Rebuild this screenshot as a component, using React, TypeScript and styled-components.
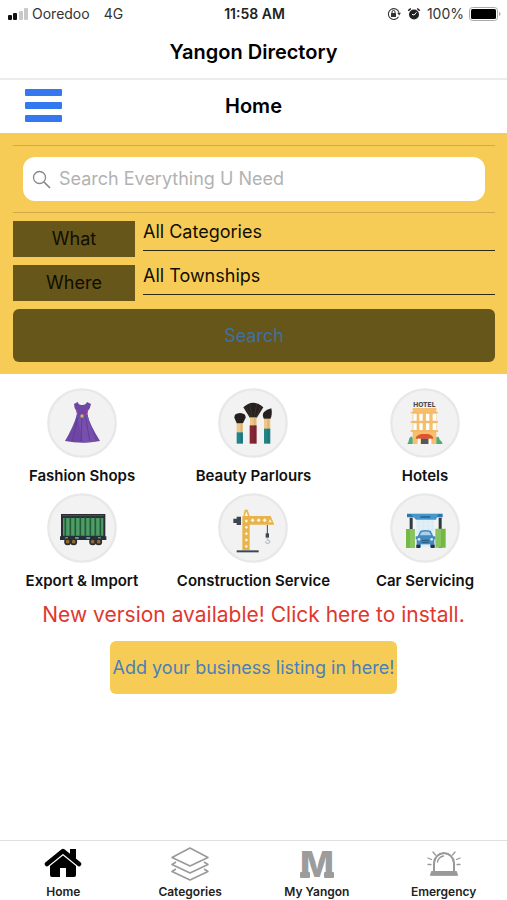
import React from "react";
import styled, { createGlobalStyle } from "styled-components";

const yellow = "#f6cc57";
const olive = "#665619";

const GlobalStyle = createGlobalStyle`
  *, *::before, *::after { box-sizing: border-box; }
  body { margin: 0; background: #fff; }
  button, input, select { font: inherit; margin: 0; }
`;

const Page = styled.div`
  display: flex;
  flex-direction: column;
  min-height: 100vh;
  font-family: Inter, "Liberation Sans", sans-serif;
  color: #000;
  background: #fff;
`;

const StatusBar = styled.div`
  display: grid;
  grid-template-columns: 1fr auto 1fr;
  align-items: center;
  height: 28px;
  padding: 0 6px 0 8px;
  font-size: 14px;
  line-height: 20px;
  color: #333;
`;

const StatusGroup = styled.div<{ $end?: boolean }>`
  display: flex;
  align-items: center;
  justify-content: ${(p) => (p.$end ? "flex-end" : "flex-start")};
  gap: ${(p) => (p.$end ? "4px" : "4px")};
`;

const Network = styled.span`
  margin-left: 10px;
`;

const Clock = styled.time`
  font-weight: 600;
  color: #222;
`;

const TitleBar = styled.header`
  display: flex;
  align-items: center;
  justify-content: center;
  height: 52px;
  padding-bottom: 2px;
  border-bottom: 2px solid #ececec;
`;

const Title = styled.h1`
  margin: 0;
  font-size: 20px;
  line-height: 24px;
  font-weight: 600;
`;

const NavBar = styled.div`
  display: grid;
  grid-template-columns: 1fr auto 1fr;
  align-items: center;
  height: 53px;
  padding: 0 24px 2px;
`;

const NavTitle = styled.h2`
  margin: 0;
  font-size: 20px;
  line-height: 24px;
  font-weight: 600;
`;

const MenuButton = styled.button`
  justify-self: start;
  display: flex;
  flex-direction: column;
  gap: 6px;
  padding: 0 1px;
  border: 0;
  background: none;
`;

const MenuLine = styled.span`
  width: 37px;
  height: 7px;
  border-radius: 1px;
  background: #3478f0;
`;

const SearchPanel = styled.form`
  display: flex;
  flex-direction: column;
  gap: 8px;
  padding: 12px 12px 12px 13px;
  background: ${yellow};
`;

const SearchBand = styled.div`
  padding: 11px 10px;
  border: solid #cfa94c;
  border-width: 1px 0;
`;

const SearchBox = styled.label`
  display: flex;
  align-items: center;
  gap: 8px;
  height: 44px;
  padding: 0 9px;
  border-radius: 12px;
  background: #fff;
`;

const SearchInput = styled.input`
  flex: 1;
  min-width: 0;
  padding: 0;
  border: 0;
  outline: 0;
  background: none;
  font-size: 18px;
  line-height: 24px;
  color: #222;
  &::placeholder { color: #b2b2b2; opacity: 1; }
`;

const FilterRow = styled.div`
  display: grid;
  grid-template-columns: 122px 1fr;
  column-gap: 8px;
  align-items: start;
`;

const FilterLabel = styled.label`
  height: 36px;
  font-size: 18px;
  line-height: 36px;
  text-align: center;
  color: #100d02;
  background: ${olive};
`;

const FilterSelect = styled.select`
  appearance: none;
  width: 100%;
  height: 30px;
  padding: 0 0 8px;
  border: 0;
  border-bottom: 1px solid #30280f;
  border-radius: 0;
  background: none;
  font-size: 18px;
  line-height: 22px;
  color: #100d04;
`;

const SearchButton = styled.button`
  height: 53px;
  border: 0;
  border-radius: 6px;
  background: ${olive};
  font-size: 18px;
  color: #3c70a8;
`;

const Shortcuts = styled.nav`
  display: grid;
  grid-template-columns: 11fr 12fr 11fr;
  row-gap: 7px;
  padding-top: 14px;
`;

const Shortcut = styled.a`
  display: flex;
  flex-direction: column;
  align-items: center;
  gap: 8px;
  font-size: 15px;
  line-height: 20px;
  font-weight: 600;
  color: #111;
  text-decoration: none;
  white-space: nowrap;
`;

const Promo = styled.div`
  display: flex;
  flex-direction: column;
  align-items: center;
  gap: 12px;
  padding-top: 10px;
`;

const UpdateLink = styled.a`
  font-size: 21px;
  line-height: 28px;
  color: #e0382e;
  text-decoration: none;
  white-space: nowrap;
`;

const ListingButton = styled.button`
  height: 53px;
  padding: 0 3px;
  border: 0;
  border-radius: 6px;
  background: ${yellow};
  font-size: 18px;
  color: #4a80b8;
  white-space: nowrap;
`;

const TabBar = styled.nav`
  display: grid;
  grid-template-columns: repeat(4, 1fr);
  height: 60px;
  margin-top: auto;
  padding-top: 6px;
  border-top: 1px solid #e0e0e0;
`;

const Tab = styled.a`
  display: flex;
  flex-direction: column;
  align-items: center;
  gap: 3px;
  font-size: 12px;
  line-height: 16px;
  font-weight: 600;
  color: #222;
  text-decoration: none;
`;

const Signal = () => (
  <svg width="20" height="14" viewBox="0 0 20 14" aria-hidden="true">
    <rect x="0" y="8" width="4" height="5" rx="1" fill="#111" />
    <rect x="5" y="6" width="4" height="7" rx="1" fill="#111" />
    <rect x="11" y="4" width="4" height="9" rx="1" fill="#c8c8c8" />
    <rect x="16" y="1" width="4" height="12" rx="1" fill="#c8c8c8" />
  </svg>
);

const RotationLock = () => (
  <svg width="14" height="14" viewBox="0 0 14 14" fill="none" stroke="#333" aria-hidden="true">
    <path d="M11.5 9.7A5.4 5.4 0 1 1 12 5.6" strokeWidth="1.1" />
    <path d="M10.2 5.8h3.7L12.2 8.5z" fill="#333" stroke="none" />
    <rect x="4" y="6" width="5" height="4" rx=".5" fill="#333" stroke="none" />
    <path d="M5 6.3V5a1.5 1.5 0 0 1 3 0v1.3" strokeWidth="1" />
  </svg>
);

const Alarm = () => (
  <svg width="18" height="14" viewBox="-2 0 18 14" aria-hidden="true">
    <circle cx="7" cy="7.500" r="5" fill="#222" />
    <path d="M1.500 4A3 3 0 0 1 4 1.700M12.500 4A3 3 0 0 0 10 1.700" fill="none" stroke="#222" strokeWidth="1.500" />
    <path d="M9.500 5.300L7.200 8 5 7.400" fill="none" stroke="#fff" strokeWidth="1" />
  </svg>
);

const Battery = () => (
  <svg width="33" height="16" viewBox="0 0 33 16" aria-hidden="true">
    <rect x="1.5" y="1.5" width="28" height="13" rx="3" fill="#fff" stroke="#aaa" />
    <rect x="3" y="3" width="25" height="10" rx="1.5" fill="#000" />
    <path d="M31 6c2 .5 2 3.500 0 4z" fill="#aaa" />
  </svg>
);

const Magnifier = () => (
  <svg width="19" height="19" viewBox="0 0 19 19" fill="none" stroke="#888" aria-hidden="true">
    <circle cx="7.500" cy="7.500" r="6" strokeWidth="1.300" />
    <path d="M12 12l6 6" strokeWidth="1.700" />
  </svg>
);

type DiscProps = { left: number; children: React.ReactNode };

const Disc = ({ left, children }: DiscProps) => (
  <svg width="70" height="70" viewBox={`${left} 24 210 210`} aria-hidden="true">
    <circle cx={left + 105} cy="129" r="101" fill="#f2f2f2" stroke="#e8e8e8" strokeWidth="7" />
    {children}
  </svg>
);

const Dress = () => (
  <Disc left={21}>
    <path d="M102 72l11-6q3 10 13 9 11 1 15-9l12 6q-2 13-9 21l-2 10q7 31 38 80-53 10-105 0 25-41 36-80l-2-10q-7-9-7-21z" fill="#6e46a4" />
    <path d="M110 103q16 3 32 0 7 31 25 81-18 4-38 3z" fill="#7750ae" />
    <path d="M114 112l-17 70M126 113l-3 71M137 112l12 70" stroke="#643c97" strokeWidth="3" fill="none" />
    <path d="M110 88l3 17M142 88l-2 17" stroke="#c23b9b" strokeWidth="3" />
    <path d="M110 104q16 4 32 0v6q-16 4-32 0z" fill="#4f5aa8" />
    <circle cx="126" cy="108" r="5" fill="#e8ae48" />
  </Disc>
);

const Brushes = () => (
  <Disc left={26}>
    <path d="M83 131L75 113q-1-13 17-14 18 1 17 14l-9 18z" fill="#26201f" />
    <path d="M82 130h19v28H82z" fill="#eec686" />
    <path d="M82 157h19v34H82z" fill="#22838a" />
    <path d="M122 114L102 82q28-28 60 0l-20 32z" fill="#26201f" />
    <path d="M110 81l16 32M121 73l8 40M142 72l-7 41M154 80l-14 33" stroke="#514532" strokeWidth="1.500" />
    <path d="M122 112h20v25h-20z" fill="#eec686" />
    <path d="M121 136h21v55h-21z" fill="#852633" />
    <path d="M164 117q-7-12 0-21 8-7 22-11 4 18-3 32z" fill="#26201f" />
    <path d="M164 116h19v31h-19z" fill="#eec686" />
    <path d="M164 146h19v45h-19z" fill="#22838a" />
    <path d="M96 132v59M136 114v77M177 118v73" stroke="#00000018" strokeWidth="5" />
  </Disc>
);

const Hotel = () => (
  <Disc left={29}>
    <text x="132" y="82" textAnchor="middle" fontFamily="Inter, sans-serif" fontSize="20" fontWeight="800" fill="#4a4f58">HOTEL</text>
    <path d="M97 84h71v108H97z" fill="#f6bf6d" />
    <path d="M91 96h82v4H91zM91 124h82v5H91zM91 151h82v5H91z" fill="#f3b868" />
    <path d="M99 101h10v21H99zM117 101h10v21h-10zM137 101h10v21h-10zM157 101h10v21h-10zM99 130h10v20H99zM117 130h10v20h-10zM137 130h10v20h-10zM157 130h10v20h-10z" fill="#fff" />
    <path d="M106 176q1-11 17-14h20q15 3 16 14z" fill="#e05332" />
    <path d="M112 176h8v16h-8zM145 176h8v16h-8z" fill="#fff" />
    <path d="M122 176h22v16h-22z" fill="#505862" />
    <path d="M81 192q4-5 6-17 7-11 10-1v18zM168 192v-20q8-5 10 7 7 4 9 13z" fill="#50ab73" />
  </Disc>
);

const Wagon = () => (
  <Disc left={21}>
    <path d="M63 87h133v74H63z" fill="#292c30" />
    <path d="M69 99h121v53H69z" fill="#4d9d65" />
    <path d="M76 97v56M91 97v56M106 97v56M121 97v56M136 97v56M151 97v56M166 97v56M181 97v56" stroke="#245a3c" strokeWidth="5" />
    <path d="M67 92h125" stroke="#37634e" strokeWidth="3" />
    <path d="M60 154h139v11H60z" fill="#273039" />
    <path d="M76 159h8M105 159h11M139 159h11M174 159h8" stroke="#7db3bd" strokeWidth="4" />
    <g fill="#936a2d" stroke="#292c30" strokeWidth="5">
      <circle cx="83" cy="170" r="8" /><circle cx="101" cy="170" r="8" />
      <circle cx="158" cy="170" r="8" /><circle cx="176" cy="170" r="8" />
    </g>
  </Disc>
);

const Crane = () => (
  <Disc left={26}>
    <path d="M72 101h10v-6h13v25H82v-6H72z" fill="#3b4650" />
    <path d="M102 94l4-20h9l6 20v101H99V94z" fill="#e9b34c" />
    <path d="M119 93h65l11 26h-76z" fill="#e9b34c" />
    <path d="M106 93l5-14 5 14zM106 108l5-5 5 5-5 5zM106 127l5-5 5 5-5 5zM106 146l5-5 5 5-5 5zM106 165l5-5 5 5-5 5zM106 184l5-5 5 5-5 5zM124 106l6-6 6 6-6 6zM142 106l6-6 6 6-6 6zM160 106l6-6 6 6-6 6zM178 112l4-10 5 10z" fill="#fff4db" />
    <path d="M82 199h66" stroke="#3b4650" strokeWidth="6" />
    <path d="M174 120v30" stroke="#3b4650" strokeWidth="3" />
    <path d="M169 145h10v13h-10z" fill="#3b4650" />
    <path d="M174 158v7q8 1 7 7-7 8-13-2" fill="none" stroke="#c0c2c4" strokeWidth="4" />
  </Disc>
);

const CarLift = () => (
  <Disc left={29}>
    <path d="M107 105h55v44h-55z" fill="#e0eff5" />
    <path d="M116 108v34M130 108v34M144 108v34M156 108v34" stroke="#d2e7ef" strokeWidth="3" strokeDasharray="6 5" />
    <path d="M88 98h9v91h-9zM175 98h9v91h-9z" fill="#303a41" />
    <path d="M77 132h12v57H77zM183 131h13v57h-13z" fill="#74b943" />
    <path d="M89 132h15v57H89zM165 131h18v57h-18z" fill="#8ac461" />
    <path d="M80 86h107v11H80z" fill="#2879b3" />
    <path d="M91 87h83l-7 17h-60z" fill="#4598ce" />
    <path d="M120 96h30" stroke="#245b7c" strokeWidth="4" />
    <path d="M106 154h6l8-17q15-4 31 0l8 17h6v9h-3v23h-53v-23h-3z" fill="#438ac0" />
    <path d="M118 151l6-10q12-3 23 0l6 10z" fill="#a7d2e9" />
    <circle cx="116" cy="163" r="4" fill="#d8edf5" /><circle cx="154" cy="163" r="4" fill="#d8edf5" />
    <path d="M124 166h22M124 172h22" stroke="#245b7c" strokeWidth="3" />
    <path d="M121 178h29v8h-29z" fill="#e6eef2" />
    <path d="M108 179h12v10h-12zM151 179h12v10h-12z" fill="#26333b" />
  </Disc>
);

const HomeIcon = () => (
  <svg width="38" height="34" viewBox="0 0 38 34" aria-hidden="true">
    <path d="M3 17L19 4l16 13" fill="none" stroke="#000" strokeWidth="4.500" strokeLinecap="round" strokeLinejoin="round" />
    <path d="M26 2h6v12l-6-5z" />
    <path d="M6 19L19 8.500 32 19v9q0 2-2 2h-8v-9h-6v9H8q-2 0-2-2z" />
  </svg>
);

const LayersIcon = () => (
  <svg width="38" height="34" viewBox="0 0 38 34" fill="none" stroke="#999" strokeWidth="1.500" strokeLinejoin="round" aria-hidden="true">
    <path d="M19 1l18 9.500L19 19 1 10.500zM5 15l-4 2.500L19 26l18-8.500-4-2.500M5 22l-4 2.500L19 33l18-8.500-4-2.500" />
  </svg>
);

const MonogramIcon = () => (
  <svg width="38" height="34" viewBox="0 0 38 34" fill="#9c9c9c" aria-hidden="true">
    <text x="19" y="30" textAnchor="middle" fontFamily="Inter, sans-serif" fontWeight="800" fontSize="36">M</text>
    <rect x="2" y="25" width="10" height="6" rx="1" />
    <rect x="26" y="25" width="10" height="6" rx="1" />
  </svg>
);

const SirenIcon = () => (
  <svg width="38" height="34" viewBox="0 0 38 34" fill="none" stroke="#999" strokeLinecap="round" aria-hidden="true">
    <path d="M9 24V16q1-9 10-10 9 1 10 10v8" strokeWidth="2" />
    <path d="M12.500 15q1-5 6-6" strokeWidth="1.300" />
    <path d="M5.500 28l1-3.500h25l1 3.500z" fill="#999" strokeWidth="1" />
    <path d="M8 5l2.500 3M30 5l-2.500 3M3 11l3.500 1.500M35 11l-3.500 1.500M3 17.500h3M35 17.500h-3" strokeWidth="1.300" />
  </svg>
);

const shortcuts = [
  { name: "Fashion Shops", Icon: Dress },
  { name: "Beauty Parlours", Icon: Brushes },
  { name: "Hotels", Icon: Hotel },
  { name: "Export & Import", Icon: Wagon },
  { name: "Construction Service", Icon: Crane },
  { name: "Car Servicing", Icon: CarLift },
];

const tabs = [
  { name: "Home", Icon: HomeIcon },
  { name: "Categories", Icon: LayersIcon },
  { name: "My Yangon", Icon: MonogramIcon },
  { name: "Emergency", Icon: SirenIcon },
];

export default function App() {
  return (
    <Page>
      <GlobalStyle />
      <StatusBar>
        <StatusGroup>
          <Signal />
          <span>Ooredoo</span>
          <Network>4G</Network>
        </StatusGroup>
        <Clock>11:58 AM</Clock>
        <StatusGroup $end>
          <RotationLock />
          <Alarm />
          <span>100%</span>
          <Battery />
        </StatusGroup>
      </StatusBar>
      <TitleBar>
        <Title>Yangon Directory</Title>
      </TitleBar>
      <NavBar>
        <MenuButton type="button" aria-label="Menu">
          <MenuLine />
          <MenuLine />
          <MenuLine />
        </MenuButton>
        <NavTitle>Home</NavTitle>
      </NavBar>
      <SearchPanel onSubmit={(e) => e.preventDefault()}>
        <SearchBand>
          <SearchBox>
            <Magnifier />
            <SearchInput type="text" aria-label="Search" placeholder="Search Everything U Need" />
          </SearchBox>
        </SearchBand>
        <FilterRow>
          <FilterLabel htmlFor="what">What</FilterLabel>
          <FilterSelect id="what">
            <option>All Categories</option>
          </FilterSelect>
        </FilterRow>
        <FilterRow>
          <FilterLabel htmlFor="where">Where</FilterLabel>
          <FilterSelect id="where">
            <option>All Townships</option>
          </FilterSelect>
        </FilterRow>
        <SearchButton type="submit">Search</SearchButton>
      </SearchPanel>
      <Shortcuts>
        {shortcuts.map(({ name, Icon }) => (
          <Shortcut href="#" key={name}>
            <Icon />
            {name}
          </Shortcut>
        ))}
      </Shortcuts>
      <Promo>
        <UpdateLink href="#">New version available! Click here to install.</UpdateLink>
        <ListingButton type="button">Add your business listing in here!</ListingButton>
      </Promo>
      <TabBar>
        {tabs.map(({ name, Icon }) => (
          <Tab href="#" key={name}>
            <Icon />
            {name}
          </Tab>
        ))}
      </TabBar>
    </Page>
  );
}
